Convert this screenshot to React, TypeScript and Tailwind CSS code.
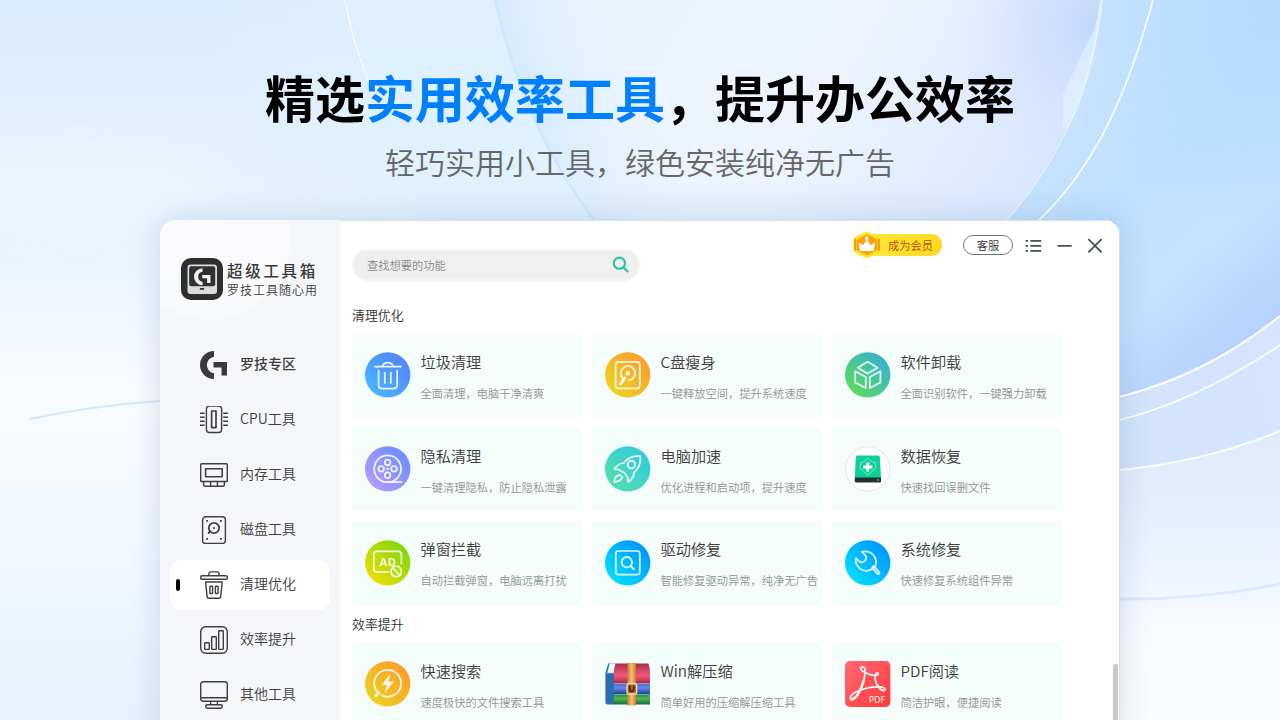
import type { ReactNode } from 'react';
import clsx from 'clsx';

interface Tool {
  title: string;
  desc: string;
  icon: ReactNode;
}

interface NavItem {
  label: string;
  icon: ReactNode;
  bold?: boolean;
}

const Backdrop = () => (
  <svg className="absolute inset-0" width="1280" height="720" viewBox="0 0 1280 720" fill="none">
    <defs>
      <linearGradient id="base" x1="0" y1="0" x2="0" y2="1">
        <stop offset="0" stopColor="#d9ebfe" />
        <stop offset="0.3" stopColor="#e7f2fe" />
        <stop offset="0.55" stopColor="#f8fbff" />
        <stop offset="0.75" stopColor="#f2f8ff" />
        <stop offset="1" stopColor="#e6f1fe" />
      </linearGradient>
      <linearGradient id="low" x1="0" y1="0" x2="0" y2="1">
        <stop offset="0" stopColor="#d8e6fc" />
        <stop offset="0.45" stopColor="#e2edfc" />
        <stop offset="0.62" stopColor="#ecf3ff" />
        <stop offset="0.8" stopColor="#f8fbff" />
        <stop offset="1" stopColor="#fbfcff" />
      </linearGradient>
      <linearGradient id="orb" x1="640" y1="40" x2="1000" y2="250" gradientUnits="userSpaceOnUse">
        <stop offset="0" stopColor="#eaf4ff" />
        <stop offset="0.45" stopColor="#edf4ff" />
        <stop offset="1" stopColor="#d8e7fe" />
      </linearGradient>
      <linearGradient id="glass" x1="1060" y1="100" x2="1270" y2="340" gradientUnits="userSpaceOnUse">
        <stop offset="0" stopColor="#c8e2fd" />
        <stop offset="0.35" stopColor="#c0e0fe" />
        <stop offset="0.65" stopColor="#c6e1fe" />
        <stop offset="1" stopColor="#b4cffd" />
      </linearGradient>
      <linearGradient id="ring" x1="1120" y1="420" x2="1280" y2="380" gradientUnits="userSpaceOnUse">
        <stop offset="0" stopColor="#d2e3fa" />
        <stop offset="1" stopColor="#d5e5fe" />
      </linearGradient>
      <radialGradient id="corner" cx="1280" cy="0" r="230" gradientUnits="userSpaceOnUse">
        <stop offset="0" stopColor="#b2dcff" />
        <stop offset="1" stopColor="#b2dcff" stopOpacity="0" />
      </radialGradient>
      <radialGradient id="violet" cx="1095" cy="25" r="150" gradientUnits="userSpaceOnUse">
        <stop offset="0" stopColor="#c2d7fb" />
        <stop offset="1" stopColor="#d5e4fe" stopOpacity="0" />
      </radialGradient>
      <linearGradient id="veil" x1="0" y1="0" x2="1" y2="0">
        <stop offset="0" stopColor="#dff3ff" stopOpacity="0" />
        <stop offset="1" stopColor="#dff3ff" />
      </linearGradient>
      <linearGradient id="fold" x1="495" y1="40" x2="640" y2="0" gradientUnits="userSpaceOnUse">
        <stop offset="0" stopColor="#d3e9fd" />
        <stop offset="1" stopColor="#e6f3ff" stopOpacity="0" />
      </linearGradient>
      <filter id="soft" x="-20%" y="-20%" width="140%" height="140%">
        <feGaussianBlur stdDeviation="22" />
      </filter>
    </defs>
    <path d="M0 0H1280V720H0Z" fill="url(#base)" />
    <path d="M200 0H345Q365 130 440 220H300Z" fill="url(#veil)" opacity="0.6" />
    <path d="M345 0H495Q530 130 594 220H430Q370 120 345 0Z" fill="#dff1ff" opacity="0.8" />
    <ellipse cx="80" cy="190" rx="150" ry="50" fill="#eff7ff" opacity="0.7" filter="url(#soft)" />
    <path d="M495 0H1100C1090 90 1060 155 1006 222H594Q520 120 495 0Z" fill="url(#orb)" />
    <path d="M495 0H640Q640 120 700 222H594Q523 126 495 0Z" fill="url(#fold)" />
    <path d="M780 0H1100C1090 90 1060 155 1006 222H780Z" fill="url(#violet)" />
    <path d="M400 190H1050V222H400Z" fill="#dbeafb" opacity="0.5" filter="url(#soft)" />
    <path d="M1119 300H1280V720H1119Z" fill="url(#low)" />
    <path d="M1102 0H1280V316Q1205 376 1100 401V222H1006C1060 155 1090 90 1102 0Z" fill="url(#glass)" />
    <path d="M1102 0H1280V230H1040C1080 160 1100 90 1102 0Z" fill="url(#corner)" />
    <path d="M1119 397Q1205 376 1280 316V431Q1205 464 1119 470Z" fill="url(#ring)" />
    <path d="M1101 0Q1097 28 1086 45Q1070 80 1063 94Q1064 120 1062 128Q1069 133 1080 102Q1097 60 1102 0Z" fill="#e2f5ff" opacity="0.6" />
    <path d="M1153 0C1130 85 1098 165 1038 221" stroke="#fff" strokeWidth="1.6" />
    <path d="M1102 0C1092 90 1060 160 1006 221" stroke="#f1faff" strokeWidth="1.2" opacity="0.85" />
    <path d="M1119 397Q1205 376 1280 316" stroke="#fff" strokeWidth="2" />
    <path d="M1119 420Q1195 402 1280 345" stroke="#fff" strokeWidth="1.6" />
    <path d="M1119 470Q1205 462 1280 431" stroke="#fff" strokeWidth="2" />
    <path d="M1119 599Q1200 600 1280 584" stroke="#dcebfc" strokeWidth="3" />
    <path d="M345 0Q353 45 370 85" stroke="#fff" strokeWidth="1.4" opacity="0.9" />
    <path d="M495 0Q523 126 594 220" stroke="#c6e7fb" strokeWidth="2.5" opacity="0.7" />
    <path d="M30 419Q90 406 160 401" stroke="#cfe6fb" strokeWidth="2" opacity="0.9" />
  </svg>
);

const gMark = 'M14 0A14 14 0 0 0 14 28V22.3A8.4 8.4 0 0 1 14 5.7ZM13.5 11H27V24.4H21.5V16.6H13.5Z';

const Logo = () => (
  <svg width="42" height="42" viewBox="0 0 42 42" className="shrink-0">
    <rect width="42" height="42" rx="10" fill="#2d2e30" />
    <rect x="6.5" y="6.5" width="29.5" height="29.5" rx="3" fill="#dcdcdc" />
    <rect x="8.2" y="8.2" width="26" height="20" rx="2" fill="#2f3032" />
    <rect x="18.8" y="30" width="4.4" height="1.8" rx="0.6" fill="#2d2e30" />
    <path d={gMark} fill="#f1f1f1" transform="translate(13 10.2) scale(0.61)" />
  </svg>
);

const NavSvg = ({ children }: { children: ReactNode }) => (
  <svg width="28" height="29" viewBox="0 0 28 29" fill="none" stroke="#3f3f3f" strokeWidth="1.4" strokeLinejoin="round">
    {children}
  </svg>
);

const navItems: NavItem[] = [
  {
    label: '罗技专区',
    bold: true,
    icon: <NavSvg><path d={gMark} fill="#3a3a3a" stroke="none" /></NavSvg>,
  },
  {
    label: 'CPU工具',
    icon: (
      <NavSvg>
        <rect x="6.4" y="0.1" width="15.2" height="26.4" rx="3" />
        <rect x="11.6" y="5" width="4.4" height="16.6" strokeWidth="1.7" />
        <path d="M0 7.2H4.6M0 11.2H4.6M0 15.2H4.6M0 19.2H4.6M23.2 7.2H28M23.2 11.2H28M23.2 15.2H28M23.2 19.2H28" strokeWidth="1.6" />
      </NavSvg>
    ),
  },
  {
    label: '内存工具',
    icon: (
      <NavSvg>
        <rect x="0.7" y="2.8" width="26.6" height="17.7" rx="0.8" />
        <rect x="5.6" y="7.8" width="16.6" height="8" strokeWidth="1.6" />
        <path d="M3.6 20.5V23.4Q3.6 25.2 5.4 25.2H22.6Q24.4 25.2 24.4 23.4V20.5M10.6 20.5V25.2M17.4 20.5V25.2" />
      </NavSvg>
    ),
  },
  {
    label: '磁盘工具',
    icon: (
      <NavSvg>
        <rect x="2.6" y="0.8" width="22.8" height="26.6" rx="3" />
        <circle cx="14" cy="12" r="5.2" strokeWidth="1.8" />
        <path d="M10.6 14.6L8.2 17.6" strokeWidth="2" />
        <path d="M6.2 4.8H8M20 4.8H21.8M6.2 22.8H8M20 22.8H21.8M13.2 12H14.8" strokeWidth="1.8" />
      </NavSvg>
    ),
  },
  {
    label: '清理优化',
    icon: (
      <NavSvg>
        <path d="M8.9 4.6V2.8Q8.9 0.9 10.8 0.9H17.2Q19.1 0.9 19.1 2.8V4.6" />
        <rect x="0.7" y="4.7" width="26.6" height="3.6" rx="1.4" />
        <path d="M5.6 11H22.2L20.7 25.6Q20.5 27.3 18.8 27.3H9Q7.3 27.3 7.1 25.6Z" />
        <rect x="9.9" y="15.3" width="2.7" height="7.2" rx="0.5" />
        <rect x="15.4" y="15.3" width="2.7" height="7.2" rx="0.5" />
      </NavSvg>
    ),
  },
  {
    label: '效率提升',
    icon: (
      <NavSvg>
        <rect x="0.7" y="0.7" width="26.6" height="26.6" rx="5" />
        <rect x="4.7" y="16.8" width="4.6" height="6.6" rx="0.6" />
        <rect x="11.7" y="10.8" width="4.6" height="12.6" rx="0.6" />
        <rect x="18.7" y="4.8" width="4.6" height="18.6" rx="0.6" />
      </NavSvg>
    ),
  },
  {
    label: '其他工具',
    icon: (
      <NavSvg>
        <rect x="0.7" y="0.8" width="26.6" height="19.4" rx="2.5" />
        <path d="M0.7 16.8H27.3M10.6 20.2V23.6M17.4 20.2V23.6" />
        <rect x="5.7" y="23.8" width="16.6" height="3.4" rx="1.4" />
      </NavSvg>
    ),
  },
];

interface RoundIconProps {
  id: string;
  from: string;
  to: string;
  children: ReactNode;
}

// gradient runs from the bottom left to the top right
const RoundIcon = ({ id, from, to, children }: RoundIconProps) => (
  <svg width="46" height="46" viewBox="0 0 46 46" fill="none" stroke="#fff" strokeWidth="1.7" strokeLinecap="round" strokeLinejoin="round" className="shrink-0">
    <defs>
      <linearGradient id={id} x1="0.1" y1="0.9" x2="0.9" y2="0.1">
        <stop offset="0" stopColor={from} />
        <stop offset="1" stopColor={to} />
      </linearGradient>
    </defs>
    <circle cx="22.7" cy="22.9" r="22.7" fill={`url(#${id})`} stroke="none" />
    <g opacity="0.9">{children}</g>
  </svg>
);

const cleanTools: Tool[] = [
  {
    title: '垃圾清理',
    desc: '全面清理，电脑干净清爽',
    icon: (
      <RoundIcon id="i1" from="#46b8ff" to="#5682f8">
        <path d="M10 14.6H36M17.6 14.4A5.3 4.6 0 0 1 28 14.4M13.6 18.5V33Q13.6 36.6 17.2 36.6H28.6Q32.2 36.6 32.2 33V18.5M19.8 20.5V31M25.8 20.5V31" />
      </RoundIcon>
    ),
  },
  {
    title: 'C盘瘦身',
    desc: '一键释放空间，提升系统速度',
    icon: (
      <RoundIcon id="i2" from="#ecd41d" to="#fc9b2d">
        <rect x="10.6" y="9.8" width="24.2" height="26.6" rx="3" />
        <path d="M18.4 26.8A7.2 7.2 0 1 1 23.4 28.4" />
        <circle cx="22.8" cy="21.3" r="2.2" fill="#fff" stroke="none" />
        <path d="M19.6 26L15.8 31.8" strokeWidth="3" />
      </RoundIcon>
    ),
  },
  {
    title: '软件卸载',
    desc: '全面识别软件，一键强力卸载',
    icon: (
      <RoundIcon id="i3" from="#5ade59" to="#36b0d2">
        <path d="M22.6 9.8L32.6 15.8L22.6 21.6L12.8 15.8ZM10.2 19.2L20.8 25V36L10.2 30.4ZM35.4 19.2L24.8 25V36L35.4 30.4Z" />
      </RoundIcon>
    ),
  },
  {
    title: '隐私清理',
    desc: '一键清理隐私，防止隐私泄露',
    icon: (
      <RoundIcon id="i4" from="#b39cff" to="#6c8cff">
        <circle cx="22.6" cy="22.8" r="13.4" />
        <circle cx="22.6" cy="16.4" r="2.8" />
        <circle cx="22.6" cy="29.2" r="2.8" />
        <circle cx="16.2" cy="22.8" r="2.8" />
        <circle cx="29" cy="22.8" r="2.8" />
        <circle cx="22.6" cy="22.8" r="1.3" fill="#fff" stroke="none" />
        <path d="M22.6 36.2H36.4" />
      </RoundIcon>
    ),
  },
  {
    title: '电脑加速',
    desc: '优化进程和启动项，提升速度',
    icon: (
      <RoundIcon id="i5" from="#53dfac" to="#32cae0">
        <path d="M35.2 10.2C28 9.4 22.4 12 18.8 17C14.8 17.4 11.6 19.4 9.4 23.2C12 22.8 14.4 23.2 16.2 25.2C19 26 20.6 27.4 21.2 29.6C23 31.4 23.6 33.4 23 36C27 33.8 29 30.6 29 26.6C33.8 22.6 36 17 35.2 10.2Z" />
        <circle cx="26.4" cy="18.6" r="3.8" />
        <path d="M14.6 28.6C11.4 29.6 9.6 32 9.2 36C13.2 35.8 15.8 34.4 17.4 31.6Z" />
      </RoundIcon>
    ),
  },
  {
    title: '数据恢复',
    desc: '快速找回误删文件',
    icon: (
      <svg width="46" height="46" viewBox="0 0 46 46" fill="none" className="shrink-0">
        <circle cx="22.7" cy="22.9" r="22.1" fill="#fff" stroke="#ececf0" strokeWidth="1.2" />
        <path d="M12.4 9.6H33Q34.6 9.6 34.8 11L36 32H9.8L10.8 11Q11 9.6 12.4 9.6Z" fill="#0fcf9b" />
        <path d="M9.8 31.4H36V35.2Q36 36.6 34.6 36.6H11.2Q9.8 36.6 9.8 35.2Z" fill="#22312f" />
        <path d="M32.4 34H34" stroke="#39e05b" strokeWidth="1.6" />
        <path d="M22.8 12.2L26.4 15.6L30.2 16.8L30.4 20.4L31.6 21.4L26.8 25.6L22.8 29.2L18.8 25.6L14.4 21.4L15.6 20L15.8 16.8L19.2 15.6Z" stroke="#83ecca" strokeLinejoin="round" />
        <path d="M22.8 16.4V25.6M18.2 21H27.4" stroke="#fff" strokeWidth="2.8" />
      </svg>
    ),
  },
  {
    title: '弹窗拦截',
    desc: '自动拦截弹窗，电脑远离打扰',
    icon: (
      <RoundIcon id="i7" from="#f0df00" to="#7bd70c">
        <path d="M23.6 32H11.8Q8.8 32 8.8 29V14.4Q8.8 11.4 11.8 11.4H33.4Q36.4 11.4 36.4 14.4V23.6" />
        <text x="14.4" y="25.8" fill="#fff" stroke="none" fontSize="11" fontWeight="700" letterSpacing="0.8" fontFamily="'Open Sans', sans-serif">AD</text>
        <circle cx="31.2" cy="31.4" r="5.2" />
        <path d="M27.6 27.8L34.8 35" />
      </RoundIcon>
    ),
  },
  {
    title: '驱动修复',
    desc: '智能修复驱动异常，纯净无广告',
    icon: (
      <RoundIcon id="i8" from="#00e0ff" to="#0094ff">
        <rect x="10.8" y="11" width="24" height="23.6" rx="2.6" />
        <circle cx="21.8" cy="22.2" r="5.2" strokeWidth="1.8" />
        <path d="M25.8 26.2L29 29.4" strokeWidth="2" />
      </RoundIcon>
    ),
  },
  {
    title: '系统修复',
    desc: '快速修复系统组件异常',
    icon: (
      <RoundIcon id="i9" from="#00e0ff" to="#0094ff">
        <path d="M16.8 11.8C20.6 10.8 25.4 11.6 28.4 15C31.4 18.4 31.6 22.6 30.2 26.2L27.4 28.8C23.8 31.4 18.6 31.6 15 28.6C11.4 25.6 10 22 11 18.2L13.6 20.8C15.6 22.6 18.2 22.4 19.8 20.8C21.6 19 21.4 16.4 19.8 14.6Z" />
        <path d="M28.6 27.6L33.2 32.8" strokeWidth="4.2" />
        <path d="M29.4 28.6L33 32.6" stroke="#8fdcff" strokeWidth="1.2" />
      </RoundIcon>
    ),
  },
];

const boostTools: Tool[] = [
  {
    title: '快速搜索',
    desc: '速度极快的文件搜索工具',
    icon: (
      <RoundIcon id="i10" from="#ecd41d" to="#fc9b2d">
        <path d="M12.4 31A13.4 13.4 0 1 1 16 34" />
        <path d="M13.8 31.6L10.8 34.8" strokeWidth="2.6" />
        <path d="M25.4 12.6L16.6 24H22L19.6 32L28.8 20.4H23.4Z" fill="#fff" stroke="none" />
      </RoundIcon>
    ),
  },
  {
    title: 'Win解压缩',
    desc: '简单好用的压缩解压缩工具',
    icon: (
      <svg width="46" height="46" viewBox="0 0 46 46" fill="none" className="shrink-0">
        <defs>
          <linearGradient id="red" x1="0" y1="0" x2="0" y2="1">
            <stop offset="0" stopColor="#a92b4c" />
            <stop offset="0.6" stopColor="#f25a78" />
            <stop offset="1" stopColor="#a8254a" />
          </linearGradient>
          <linearGradient id="blue" x1="0" y1="0" x2="0" y2="1">
            <stop offset="0" stopColor="#4c6fd0" />
            <stop offset="0.4" stopColor="#6288e6" />
            <stop offset="1" stopColor="#203f93" />
          </linearGradient>
          <linearGradient id="green" x1="0" y1="0" x2="0" y2="1">
            <stop offset="0" stopColor="#2c8a3d" />
            <stop offset="0.4" stopColor="#4fb55c" />
            <stop offset="1" stopColor="#1d6c2b" />
          </linearGradient>
          <linearGradient id="belt" x1="0" y1="0" x2="1" y2="0">
            <stop offset="0" stopColor="#cf7a2c" />
            <stop offset="0.5" stopColor="#f6bd77" />
            <stop offset="1" stopColor="#cf7a2c" />
          </linearGradient>
        </defs>
        <path d="M0.6 12L3.4 2.4H11.4L9 12Z" fill="#f3f6fa" stroke="#9dbfdd" strokeWidth="0.7" />
        <path d="M0.4 12.2L3.4 2.4H4.6L2.2 12.2Z" fill="#2b6cb0" />
        <path d="M0.4 12.2H9V43.6H2.4Q0.4 43.6 0.4 41.6Z" fill="#2b6cb0" />
        <path d="M10.6 2.4H43.4Q45 6 45 12V22.6H8.8V12Q9 6 10.6 2.4Z" fill="url(#red)" />
        <path d="M8.8 22.8H45V33.2H8.8Z" fill="url(#blue)" />
        <path d="M8.8 33.4H45V43.6H8.8Z" fill="url(#green)" />
        <path d="M22.4 2.2H31V44.4H22.4Z" fill="url(#belt)" />
        <rect x="22" y="22.8" width="9.6" height="10.2" rx="1.6" fill="#b8641f" stroke="#f0dcc0" strokeWidth="1.4" />
        <path d="M24.8 24.6V28Q24.8 30.2 26.8 30.2Q28.8 30.2 28.8 28V24.6" stroke="#4c2a10" strokeWidth="1.8" />
      </svg>
    ),
  },
  {
    title: 'PDF阅读',
    desc: '简洁护眼，便捷阅读',
    icon: (
      <svg width="46" height="46" viewBox="0 0 46 46" fill="none" stroke="#fff" strokeLinecap="round" className="shrink-0">
        <defs>
          <linearGradient id="pdf" x1="0" y1="0" x2="1" y2="1">
            <stop offset="0" stopColor="#ff6a76" />
            <stop offset="1" stopColor="#ff3a3a" />
          </linearGradient>
        </defs>
        <rect width="45.4" height="46" rx="5" fill="url(#pdf)" stroke="none" />
        <path d="M20 11C15.6 10.2 14.2 6 17.6 5.8C21.2 6 20.4 14 18.2 21C15.6 29 11.4 37.6 7.4 38.8C4.6 39.2 4.4 35.8 7.6 33.2C13 29 25 25.6 34 25.6C39 25.8 41.4 28.4 39.6 29.4C36 30.8 31 24.4 30 18C29.6 12.6 31.8 11 33.2 12.4C34.4 14.4 30 16 20 11.4" strokeWidth="1.6" />
        <path d="M18.6 20C16 28 11.6 37 7.6 38" strokeWidth="2.4" />
        <text x="24" y="41.6" fill="#fff" stroke="none" fontSize="8.6" fontFamily="'Open Sans', sans-serif">PDF</text>
      </svg>
    ),
  },
];

const ToolGrid = ({ tools }: { tools: Tool[] }) => (
  <div className="grid w-[710px] grid-cols-3 gap-x-2.5 gap-y-[10.3px]">
    {tools.map((tool) => (
      <div key={tool.title} className="flex h-[83.6px] rounded-[4px] bg-[#f4fdf9] pt-[18.5px] pl-[13px]">
        {tool.icon}
        <div className="-mt-[2.5px] ml-[9.5px] whitespace-nowrap">
          <p className="text-[15.2px] leading-[22px] font-[350] text-[#3c3c3c]">{tool.title}</p>
          <p className="mt-[13px] text-[11.25px] leading-4 font-[350] text-[#939393]">{tool.desc}</p>
        </div>
      </div>
    ))}
  </div>
);

const Sidebar = () => (
  <aside className="relative w-[180px] shrink-0 overflow-hidden bg-[#f5f6f9]">
    <div className="absolute -top-[60px] -left-[30px] size-[160px] rounded-full bg-linear-to-b from-[#fbfbfc] to-[#f8f9fb]" />
    <div className="relative flex items-center pt-[38px] pl-[21px]">
      <Logo />
      <div className="ml-1 whitespace-nowrap text-[#3a3a3a]">
        <p className="text-[15.5px] leading-5 font-medium tracking-[2.7px]">超级工具箱</p>
        <p className="mt-px text-xs leading-[18px] font-[350] tracking-[1px]">罗技工具随心用</p>
      </div>
    </div>
    <nav className="mt-10 flex flex-col gap-[5px] px-2.5">
      {navItems.map((item) => {
        const active = item.label === '清理优化';
        return (
          <div key={item.label} className={clsx('flex h-[50px] items-center rounded-xl', active && 'bg-white')}>
            <span className={clsx('ml-1.5 h-3 w-1 rounded-sm', active && 'bg-black')} />
            <span className="mt-px ml-5">{item.icon}</span>
            <span className={clsx('mb-1 ml-3 text-sm text-[#3d3d3d]', item.bold ? 'font-medium' : 'font-[350]')}>{item.label}</span>
          </div>
        );
      })}
    </nav>
  </aside>
);

const TopBar = () => (
  <div className="flex h-[60px] items-start">
    <div className="mt-7 flex h-8 w-[288px] items-center justify-between rounded-full border-2 border-[#f4f4f4] bg-[#efefef] pr-2 pl-[13px]">
      <span className="text-[11.25px] font-[350] text-[#888]">查找想要的功能</span>
      <svg width="18" height="18" viewBox="0 0 18 18" fill="none" stroke="#22c8a2" strokeWidth="2.1" strokeLinecap="round">
        <circle cx="7.4" cy="7.2" r="5.6" />
        <path d="M11.6 11.6L15.6 15.6" />
      </svg>
    </div>
    <div className="mt-2.5 ml-[213px] flex h-7 items-center">
      <div className="relative flex h-[22px] w-[89px] items-center justify-end rounded-full bg-linear-to-r from-[#ffe83a] to-[#ffd91f] pr-[9px]">
        <svg width="28" height="28" viewBox="0 0 28 28" className="absolute -top-[3px] left-0">
          <path d="M14 1L26.4 7V20.6L14 27L1.4 20.6V7Z" fill="#ffe51f" strokeLinejoin="round" stroke="#ffe51f" />
          <path d="M14 3.6L24.6 8.8V19L14 24.4L3.4 19V8.8Z" fill="#ffa010" />
          <path d="M2 8V19.6M26 8V19.6" stroke="#d87809" strokeWidth="1.2" />
          <path d="M5.6 11.4L10 14.2L13.8 8.4L17.8 14.2L22.2 11.4L20.8 20H7Z" fill="#fff" />
          <circle cx="13.8" cy="7.4" r="1.8" fill="#fff" />
        </svg>
        <span className="text-[11.25px] font-[350] text-[#a84e00]">成为会员</span>
      </div>
      <div className="ml-[21px] flex h-[19.5px] w-[50px] items-center justify-center rounded-full border border-[#6d7a75] text-[11.25px] font-[350] text-[#333]">客服</div>
      <svg width="78" height="16" viewBox="0 0 78 16" fill="none" stroke="#46524e" strokeWidth="1.8" className="mt-px ml-3">
        <path d="M0.6 2.8H3M5.4 2.8H16.2M0.6 7.8H3M5.4 7.8H16.2M0.6 12.8H3M5.4 12.8H16.2" />
        <path d="M32.6 7.8H46.6" />
        <path d="M63.4 1.2L76.6 14.4M76.6 1.2L63.4 14.4" />
      </svg>
    </div>
  </div>
);

export default function App() {
  return (
    <div className="relative h-[720px] w-[1280px] overflow-hidden font-['Noto_Sans_CJK_SC',sans-serif]">
      <Backdrop />
      <div className="relative flex flex-col items-center">
        <h1 className="mt-[61px] text-[50px] leading-[70px] font-bold whitespace-nowrap text-black">
          精选<span className="text-[#0080ff]">实用效率工具</span>，提升办公效率
        </h1>
        <p className="mt-[9px] text-[30px] leading-[42px] font-[350] whitespace-nowrap text-[#666]">轻巧实用小工具，绿色安装纯净无广告</p>
        <div className="mt-[38px] flex h-[560px] w-[960px] overflow-hidden rounded-2xl bg-white shadow-[0_0_30px_rgba(60,100,150,0.2)]">
          <Sidebar />
          <main className="relative flex-1 border-t border-r border-[#dcdfe3] pl-3">
            <TopBar />
            <h2 className="mt-6 mb-[8.7px] text-[12.9px] leading-5 font-[350] text-[#333]">清理优化</h2>
            <ToolGrid tools={cleanTools} />
            <h2 className="mt-[9.3px] mb-[8.3px] text-[12.9px] leading-5 font-[350] text-[#333]">效率提升</h2>
            <ToolGrid tools={boostTools} />
            <div className="absolute top-[443px] right-px h-[120px] w-[5px] rounded-full bg-[#c9c9c9]" />
          </main>
        </div>
      </div>
    </div>
  );
}
